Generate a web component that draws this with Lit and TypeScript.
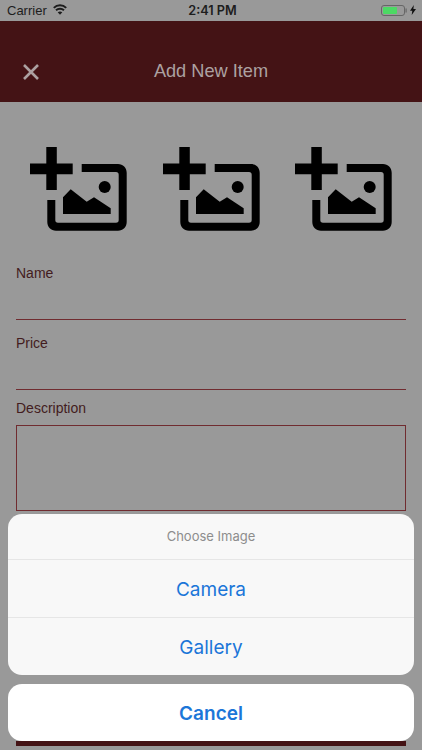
import { LitElement, html, css } from "lit";
import { customElement } from "lit/decorators.js";

const addPhoto = html`<svg class="photo" viewBox="0 0 97 85" aria-hidden="true">
  <path fill="#000" d="M16.300 0H26.800V16.500H42.700V27.300H26.800V43H16.300V27.300H0V16.500H16.300z"/>
  <path fill="#000" d="M51.700 17H88C93 17 96.700 20.700 96.700 25.700V75C96.700 80 93 83.700 88 83.700H26C21 83.700 17.300 80 17.300 75V53H25.300V73C25.300 74.800 26.200 75.700 28 75.700H86C87.800 75.700 88.700 74.800 88.700 73V27.700C88.700 26 87.800 25 86 25H51.700z"/>
  <path fill="#000" d="M33 67V50.300L40.700 42.300 56.700 54.700 64 50.300 80.700 61.300V67z"/>
  <circle fill="#000" cx="74.700" cy="40" r="6"/>
</svg>`;

@customElement("app-root")
export class AppRoot extends LitElement {
  static styles = css`
    :host {
      display: block;
      position: relative;
      width: 422px;
      height: 750px;
      overflow: hidden;
      background: #999999;
      font-family: "Liberation Sans", Arial, sans-serif;
    }
    .status {
      height: 20px;
      display: grid;
      grid-template-columns: 1fr auto 1fr;
      align-items: center;
      padding: 0 6px 0 7px;
      color: #1d1d1d;
      font-size: 13px;
    }
    .status-left { display: flex; align-items: center; gap: 6px; }
    .wifi { width: 14px; height: 11px; margin-bottom: 2px; }
    .time { font-family: Inter, "Liberation Sans", sans-serif; font-weight: 600; font-size: 12.700px; margin-left: 2px; }
    .status-right { display: flex; align-items: center; justify-content: flex-end; gap: 1px; }
    .battery { width: 28px; height: 11px; }
    .bolt { width: 6px; height: 10px; }
    .bar {
      height: 81px;
      margin-top: 1px;
      background: #441315;
      display: grid;
      grid-template-columns: 1fr auto 1fr;
      align-items: center;
      padding: 20px 23px 0;
      box-sizing: border-box;
      color: #aca1a1;
    }
    .close { width: 16px; height: 16px; }
    .title { font-size: 18.200px; }
    .photos {
      display: flex;
      justify-content: space-between;
      padding: 45px 30px 0;
    }
    .photo { width: 97px; height: 85px; display: block; }
    form {
      display: flex;
      flex-direction: column;
      padding: 33px 16px 0;
      color: #431c20;
      font-size: 14px;
    }
    .field { height: 54px; border-bottom: 1px solid #702c30; line-height: 16px; }
    .field + .field { margin-top: 15px; }
    .desc-label { margin-top: 10px; line-height: 16px; }
    .desc { height: 84px; margin-top: 9px; border: 1px solid #702c30; }
    .submit { height: 5px; margin-top: 230px; background: #441315; }
    .sheet {
      position: absolute;
      left: 8px;
      right: 8px;
      top: 514px;
      display: flex;
      flex-direction: column;
      gap: 9px;
      font-family: Inter, "Liberation Sans", sans-serif;
      text-align: center;
    }
    .group {
      display: flex;
      flex-direction: column;
      background: #f8f8f8;
      border-radius: 14px;
    }
    .heading {
      height: 44.500px;
      line-height: 45px;
      color: #8d8d8d;
      font-size: 13px;
    }
    .action {
      box-sizing: border-box;
      height: 58.300px;
      line-height: 59px;
      color: #1b76d8;
      font-size: 19px;
      border-top: 1px solid #e6e6e6;
    }
    .cancel {
      height: 57px;
      line-height: 60px;
      border-radius: 14px;
      background: #ffffff;
      color: #1b76d8;
      font-size: 19px;
      font-weight: 600;
    }
  `;

  render() {
    return html`
      <div class="status">
        <div class="status-left">
          <span>Carrier</span>
          <svg class="wifi" viewBox="0 0 14 11">
            <path fill="none" stroke="#1c1c1c" stroke-width="2" d="M.8 3.900C4.200.500 9.800.500 13.200 3.900M3 6.300C5.200 4.200 8.800 4.200 11 6.300"/>
            <path fill="#1c1c1c" d="M4.700 8.300C6 7.200 8 7.200 9.300 8.300L7 10.800z"/>
          </svg>
        </div>
        <span class="time">2:41 PM</span>
        <div class="status-right">
          <svg class="battery" viewBox="0 0 28 11">
            <rect x="0.500" y="0.500" width="23" height="10" rx="2.500" fill="none" stroke="#666"/>
            <rect x="2" y="2" width="14" height="7" rx="1" fill="#4cd964"/>
            <rect x="24.500" y="3.500" width="1.200" height="4" fill="#666"/>
          </svg>
          <svg class="bolt" viewBox="0 0 6 10"><path fill="#111" d="M3.800 0 0 5.700h2.300L1.700 10 6 4H3.400z"/></svg>
        </div>
      </div>
      <header class="bar">
        <svg class="close" viewBox="0 0 16 16"><path d="M1 1l14 14M15 1L1 15" stroke="#aca1a1" stroke-width="2.600" fill="none"/></svg>
        <div class="title">Add New Item</div>
        <span></span>
      </header>
      <div class="photos">${addPhoto}${addPhoto}${addPhoto}</div>
      <form>
        <div class="field">Name</div>
        <div class="field">Price</div>
        <div class="desc-label">Description</div>
        <div class="desc"></div>
        <div class="submit"></div>
      </form>
      <div class="sheet">
        <div class="group">
          <div class="heading">Choose Image</div>
          <div class="action">Camera</div>
          <div class="action">Gallery</div>
        </div>
        <div class="cancel">Cancel</div>
      </div>
    `;
  }
}
